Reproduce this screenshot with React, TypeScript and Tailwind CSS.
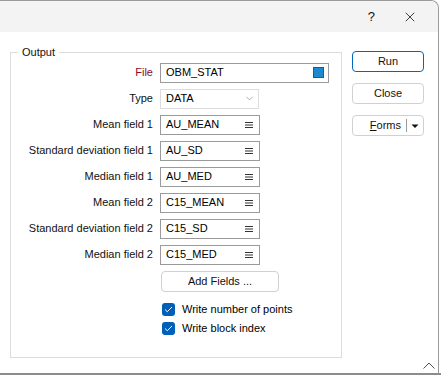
import { ChevronDown, X } from "lucide-react";

const fields = [
  { label: "Mean field 1", value: "AU_MEAN" },
  { label: "Standard deviation field 1", value: "AU_SD" },
  { label: "Median field 1", value: "AU_MED" },
  { label: "Mean field 2", value: "C15_MEAN" },
  { label: "Standard deviation field 2", value: "C15_SD" },
  { label: "Median field 2", value: "C15_MED" },
];

function Row({ label, red, children }: { label: string; red?: boolean; children: React.ReactNode }) {
  return (
    <div className="flex items-center h-[20px]">
      <div className={`w-[149px] shrink-0 whitespace-nowrap text-right pr-[7px] ${red ? "text-[#8b0a2a]" : "text-[#111]"}`}>
        {label}
      </div>
      {children}
    </div>
  );
}

function ListIcon() {
  return (
    <svg width="8" height="8" viewBox="0 0 8 8" className="mr-[6px]">
      <path d="M0 1.5h8M0 4h8M0 6.5h8" stroke="#333" strokeWidth="1" />
    </svg>
  );
}

function Check() {
  return (
    <div className="w-[13px] h-[13px] rounded-[3px] bg-[#005fb8] flex items-center justify-center">
      <svg width="9" height="7" viewBox="0 0 9 7">
        <path d="M1 3.5l2.3 2.2L8 1" fill="none" stroke="#fff" strokeWidth="1" />
      </svg>
    </div>
  );
}

export default function App() {
  return (
    <div
      className="w-[441px] h-[375px] bg-white relative overflow-hidden text-[11px]"
      style={{ fontFamily: "'Liberation Sans', Arial, sans-serif" }}
    >
      <div className="w-[439px] h-[373px] border-r border-t border-[#9a9a9a] rounded-tr-[8px] flex flex-col">
        {/* title bar */}
        <div className="h-[31px] bg-[#f3f3f3] rounded-tr-[8px] flex items-center justify-end">
          <span className="text-[13px] text-[#111] mr-[27px]">?</span>
          <X size={16} strokeWidth={1.2} className="mr-[20px] text-[#111]" />
        </div>

        <div className="flex flex-1 pt-[19px]">
          {/* group box */}
          <fieldset className="ml-[10px] w-[332px] h-[314px] border border-[#dcdcdc] px-0 pt-0 mt-[-7px]">
            <legend className="ml-[7px] px-[4px] text-[#111]">Output</legend>
            <div className="flex flex-col gap-[6px] pt-[2px]">
              <Row label="File" red>
                <div className="w-[169px] h-[20px] border border-[#9a9a9a] flex items-center justify-between pl-[5px] pr-[4px]">
                  <span>OBM_STAT</span>
                  <div className="w-[11px] h-[11px] bg-[#1e88d0] border border-[#0c5fa0]" />
                </div>
              </Row>
              <Row label="Type">
                <div className="w-[99px] h-[20px] border border-[#dcdcdc] flex items-center justify-between pl-[5px] pr-[3px]">
                  <span>DATA</span>
                  <ChevronDown size={11} strokeWidth={1.2} className="text-[#666]" />
                </div>
              </Row>
              {fields.map((f) => (
                <Row key={f.label} label={f.label}>
                  <div className="w-[100px] h-[20px] border border-[#9a9a9a] flex items-center justify-between pl-[5px]">
                    <span>{f.value}</span>
                    <ListIcon />
                  </div>
                </Row>
              ))}
              <div className="pl-[150px]">
                <div className="w-[118px] h-[21px] border border-[#d0d0d0] rounded-[4px] flex items-center justify-center text-[#111]">
                  Add Fields ...
                </div>
              </div>
              <div className="pl-[151px] pt-[5px] flex flex-col gap-[6px]">
                <div className="flex items-center gap-[7px] h-[13px]">
                  <Check />
                  <span>Write number of points</span>
                </div>
                <div className="flex items-center gap-[7px] h-[13px]">
                  <Check />
                  <span>Write block index</span>
                </div>
              </div>
            </div>
          </fieldset>

          {/* buttons */}
          <div className="ml-[10px] flex flex-col gap-[11px]">
            <div className="w-[72px] h-[21px] border border-[#0067c0] rounded-[4px] flex items-center justify-center text-[#111]">
              Run
            </div>
            <div className="w-[72px] h-[21px] border border-[#d0d0d0] rounded-[4px] flex items-center justify-center text-[#111]">
              Close
            </div>
            <div className="w-[72px] h-[21px] border border-[#d0d0d0] rounded-[4px] flex items-center text-[#111]">
              <span className="flex-1 text-right pr-[5px]">
                <span className="underline">F</span>orms
              </span>
              <div className="w-px h-[13px] bg-[#9a9a9a]" />
              <svg width="16" height="6" viewBox="0 0 16 6">
                <path d="M4.5 1.5h7l-3.5 3.5z" fill="#111" />
              </svg>
            </div>
          </div>
        </div>

        <div className="flex justify-end pr-[3px] pb-[4px]">
          <svg width="12" height="7" viewBox="0 0 12 7">
            <path d="M0.5 6.5L6 1l5.5 5.5" fill="none" stroke="#555" strokeWidth="1" />
          </svg>
        </div>
      </div>
      <div className="h-[2px] bg-[#8c8c8c]" />
    </div>
  );
}
